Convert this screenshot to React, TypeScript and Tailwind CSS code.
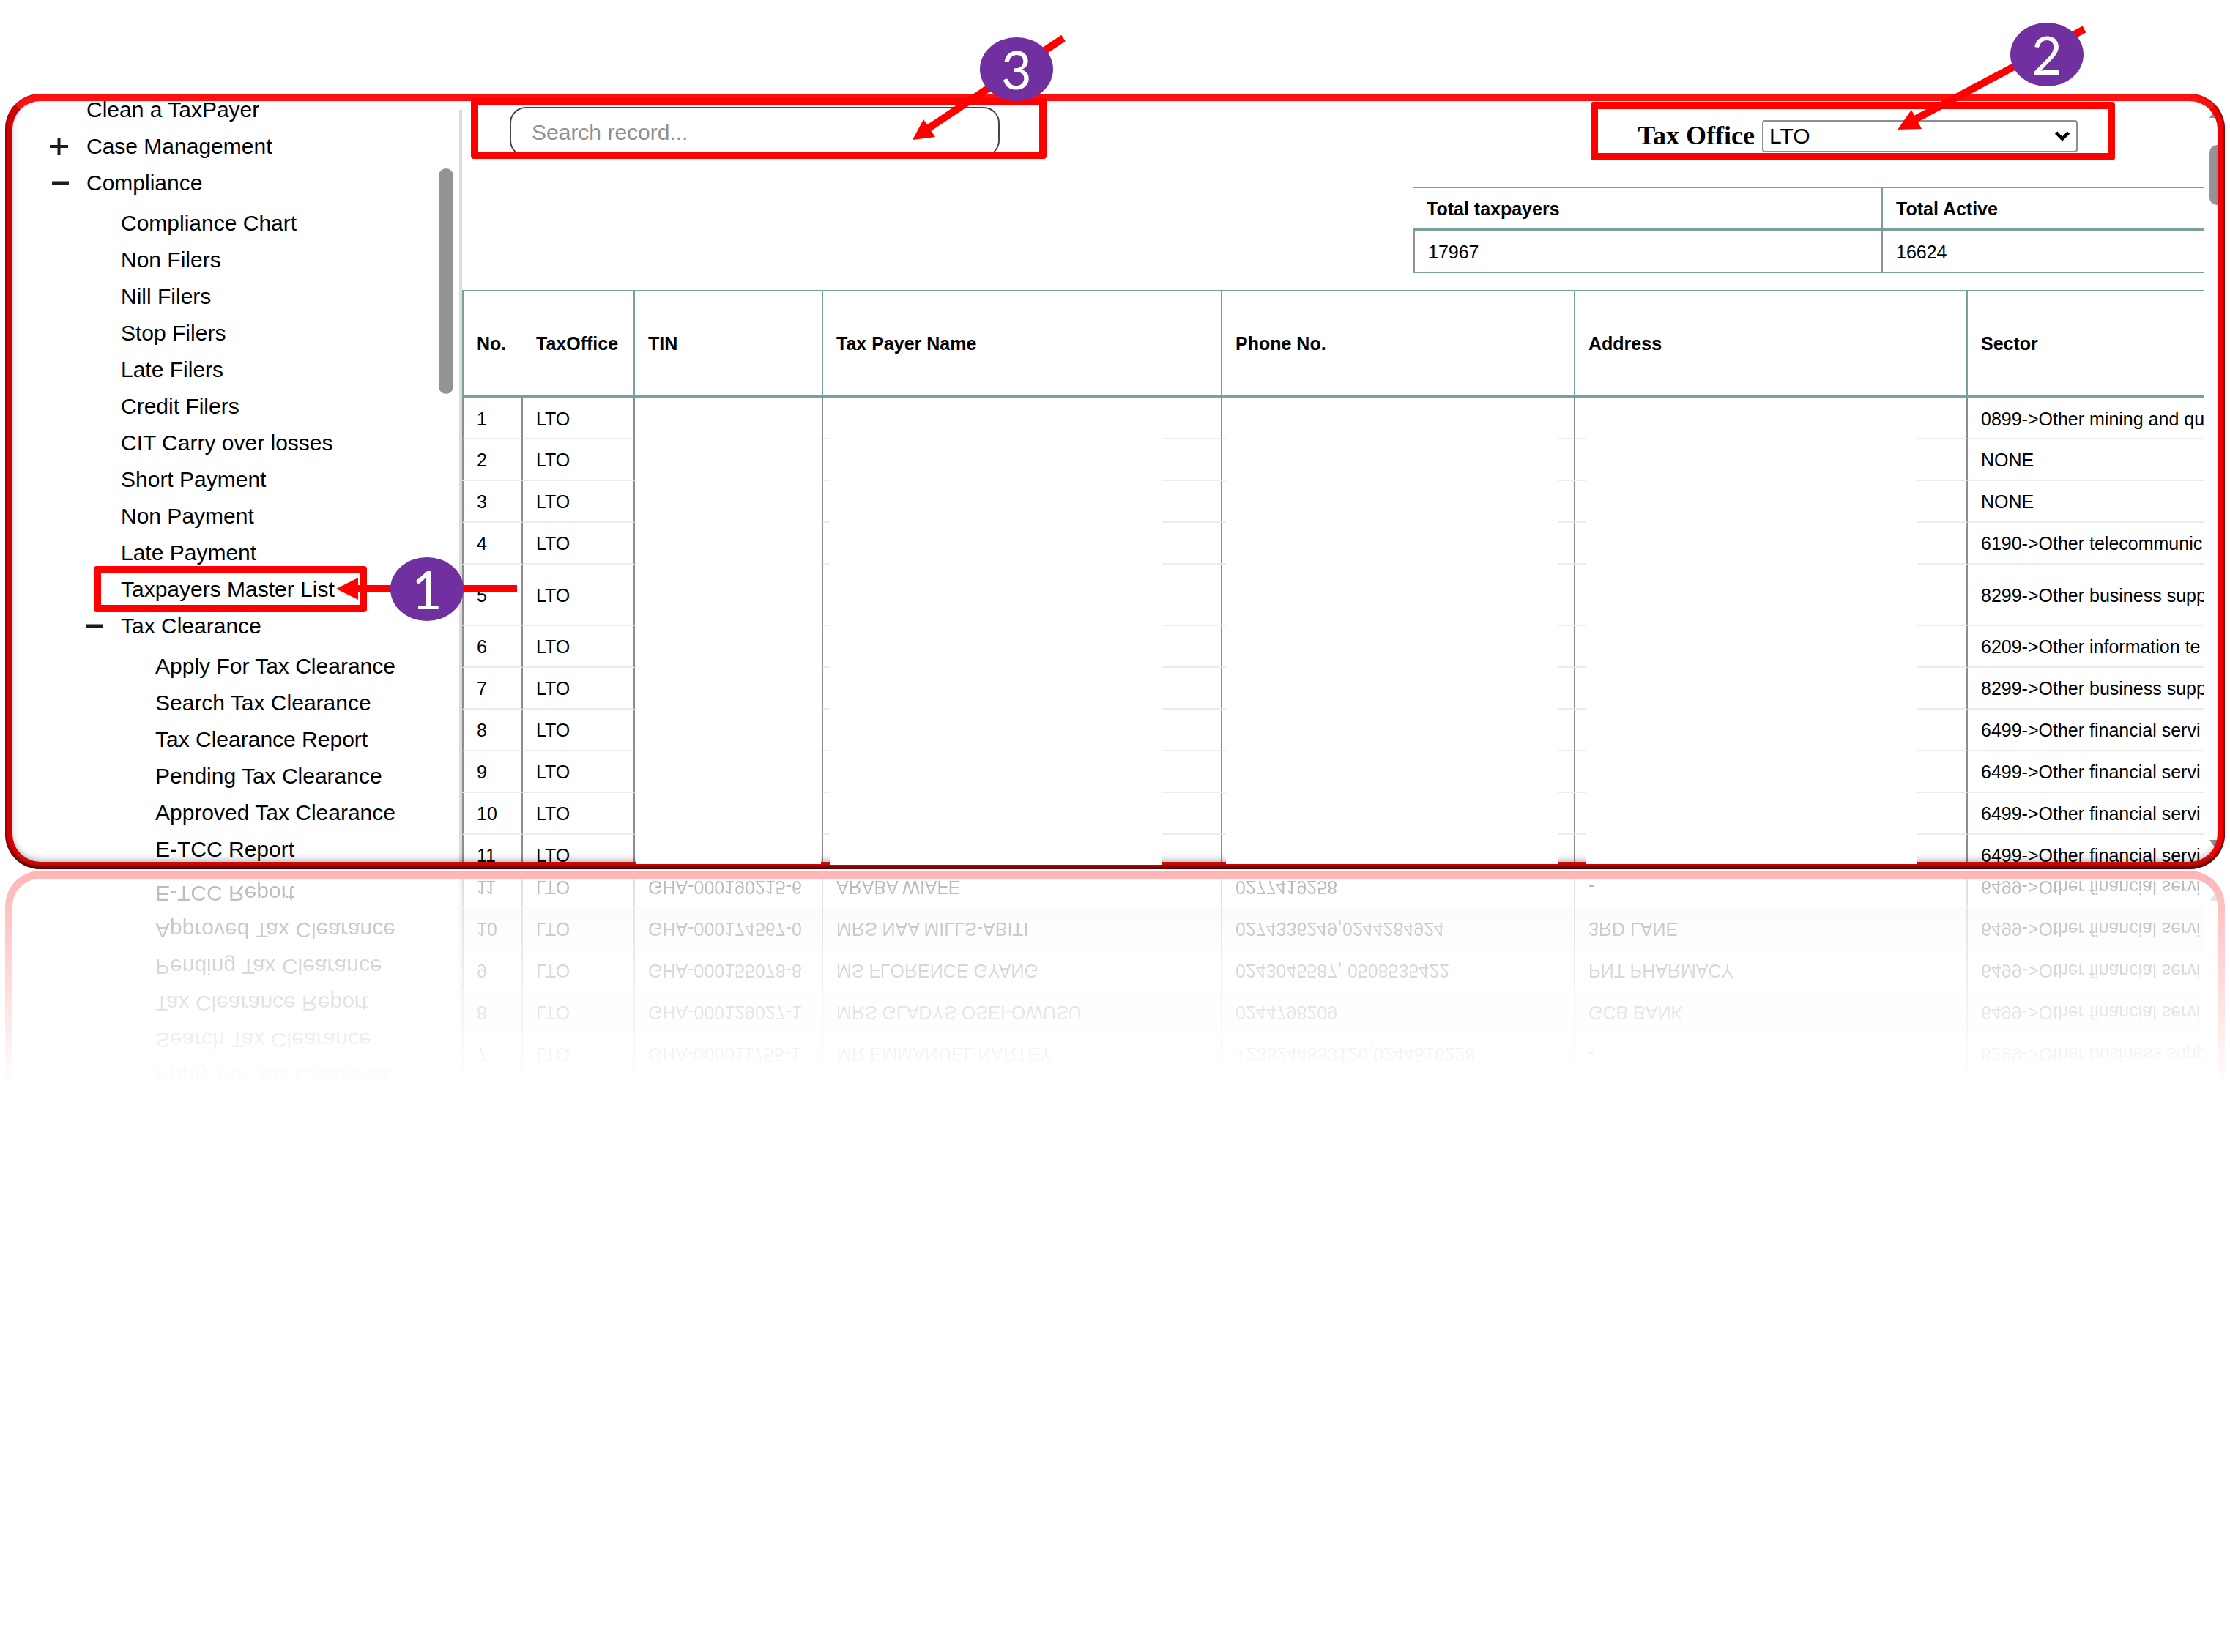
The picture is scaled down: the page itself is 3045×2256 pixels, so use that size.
import React, { useId } from "react";

type Node = { label: string; open?: boolean; children?: Node[] };

const clearance: Node[] = [
  { label: "Apply For Tax Clearance" },
  { label: "Search Tax Clearance" },
  { label: "Tax Clearance Report" },
  { label: "Pending Tax Clearance" },
  { label: "Approved Tax Clearance" },
  { label: "E-TCC Report" },
];

const menu: Node[] = [
  { label: "Clean a TaxPayer" },
  { label: "Case Management", open: false },
  {
    label: "Compliance",
    open: true,
    children: [
      { label: "Compliance Chart" },
      { label: "Non Filers" },
      { label: "Nill Filers" },
      { label: "Stop Filers" },
      { label: "Late Filers" },
      { label: "Credit Filers" },
      { label: "CIT Carry over losses" },
      { label: "Short Payment" },
      { label: "Non Payment" },
      { label: "Late Payment" },
      { label: "Taxpayers Master List" },
      { label: "Tax Clearance", open: true, children: clearance },
    ],
  },
];

type Row = [string, string, string, string, string];

const rows: Row[] = [
  ["", "", "", "", "0899->Other mining and qu"],
  ["", "", "", "", "NONE"],
  ["", "", "", "", "NONE"],
  ["", "", "", "", "6190->Other telecommunic"],
  ["", "", "", "", "8299->Other business supp"],
  ["", "", "", "", "6209->Other information te"],
  ["GHA-000011755-1", "MR EMMANUEL NARTEY", "+233244833120,0244516228", "-", "8299->Other business supp"],
  ["GHA-000129027-1", "MRS GLADYS OSEI-OWUSU", "0244798209", "GCB BANK", "6499->Other financial servi"],
  ["GHA-000155078-8", "MS FLORENCE GYANG", "0243045587, 0508535422", "PNT PHARMACY", "6499->Other financial servi"],
  ["GHA-000174567-0", "MRS NAA MILLS-ABITI", "0274336249,0244284924", "3RD LANE", "6499->Other financial servi"],
  ["GHA-000190215-6", "ARABA WIAFE", "0277419258", "-", "6499->Other financial servi"],
];

function ToggleIcon({ open }: { open: boolean }) {
  return (
    <svg viewBox="0 0 28 28" className="size-7" aria-hidden="true">
      <path
        d={open ? "M3 14H26" : "M0 14H25M12.500 3V25"}
        stroke="#1c1c1c"
        strokeWidth={open ? 5 : 4}
        fill="none"
      />
    </svg>
  );
}

function MenuList({ items, nested }: { items: Node[]; nested?: boolean }) {
  return (
    <ul className={nested ? "mt-[5px] pl-[47px]" : "-mt-[13px] pl-[51px]"}>
      {items.map((item) => (
        <li key={item.label}>
          <div className="flex h-[50px] items-center gap-[22px]">
            {item.open === undefined ? (
              <span className="w-7 shrink-0" />
            ) : (
              <button type="button" aria-expanded={item.open} aria-label={"Toggle " + item.label} className="shrink-0">
                <ToggleIcon open={item.open} />
              </button>
            )}
            <a href="#" className="whitespace-nowrap text-[30px] leading-[50px]">
              {item.label}
            </a>
          </div>
          {item.children && <MenuList items={item.children} nested />}
        </li>
      ))}
    </ul>
  );
}

const teal = "border-[#7a9f9f]";

function Summary() {
  const head = `h-[61px] border-t-2 border-b-4 ${teal} pl-[18px] text-left font-bold`;
  const cell = `h-[57px] border-b-2 ${teal} pl-[18px]`;
  return (
    <div className="ml-auto w-[1079px] overflow-hidden">
      <table className="w-[1282px] table-fixed border-separate border-spacing-0 text-[25px] leading-7">
        <thead>
          <tr>
            <th className={`${head} w-[641px] border-r-2`}>Total taxpayers</th>
            <th className={head}>Total Active</th>
          </tr>
        </thead>
        <tbody>
          <tr>
            <td className={`${cell} border-x-2 border-x-[#8f9494]`}>17967</td>
            <td className={cell}>16624</td>
          </tr>
        </tbody>
      </table>
    </div>
  );
}

const tableStyle = "w-[2700px] table-fixed border-separate border-spacing-0 text-[25px] leading-7";

function Columns() {
  return (
    <colgroup>
      <col className="w-[83px]" />
      <col className="w-[153px]" />
      <col className="w-[257px]" />
      <col className="w-[545px]" />
      <col className="w-[482px]" />
      <col className="w-[536px]" />
      <col />
    </colgroup>
  );
}

function Rows({ from, full }: { from: number; full?: boolean }) {
  const cell = "border-b-2 border-r-2 border-b-[#ececec] border-r-[#8c8c8c] pl-[18px] pt-px whitespace-nowrap";
  return (
    <tbody>
      {rows.slice(from).map((row, k) => {
        const i = from + k;
        return (
          <tr
            key={i}
            className={`${i === 0 ? "h-14" : i === 4 ? "h-[84px]" : "h-[57px]"} ${
              full && i % 2 === 1 ? "bg-[#f4f4f4]" : ""
            }`}
          >
            <td className={`${cell} border-l-2 border-l-[#8c8c8c]`}>{i + 1}</td>
            <td className={cell}>LTO</td>
            {row.map((value, j) => (
              <td key={j} className={cell}>
                {full || j === 4 ? value : ""}
              </td>
            ))}
          </tr>
        );
      })}
    </tbody>
  );
}

function MasterList() {
  const head = `h-[148px] border-t-2 border-b-4 ${teal} pl-[18px] text-left font-bold`;
  return (
    <div className="mt-[23px] overflow-hidden">
      <table className={tableStyle}>
        <Columns />
        <thead>
          <tr>
            <th className={`${head} border-l-2`}>No.</th>
            <th className={`${head} border-r-2`}>TaxOffice</th>
            <th className={`${head} border-r-2`}>TIN</th>
            <th className={`${head} border-r-2`}>Tax Payer Name</th>
            <th className={`${head} border-r-2`}>Phone No.</th>
            <th className={`${head} border-r-2`}>Address</th>
            <th className={head}>Sector</th>
          </tr>
        </thead>
        <Rows from={0} />
      </table>
    </div>
  );
}

function ScrollArrow({ place, d }: { place: string; d: string }) {
  return (
    <svg viewBox="0 0 20 14" className={`absolute -right-[9px] h-3.5 w-5 ${place}`} aria-hidden="true">
      <path d={d} fill="#8f8f8f" />
    </svg>
  );
}

function Screen() {
  const id = useId();
  return (
    <div className="flex h-full overflow-hidden rounded-[48px] p-2.5">
      <nav className="relative w-[610px] shrink-0">
        <MenuList items={menu} />
        <div className="absolute top-[92px] right-2 h-[308px] w-5 rounded-full bg-[#949494]" />
      </nav>
      <div className="mt-3 w-1 shrink-0 bg-[#dcdcdc]" />
      <main className="relative min-w-0 flex-1 pr-[19px]">
        <div className="flex h-[117px] items-start justify-between pr-[172px] pl-[65px]">
          <input
            type="search"
            aria-label="Search record"
            placeholder="Search record..."
            className="mt-2 h-[68px] w-[669px] rounded-[22px] border-2 border-[#444] px-7 pt-0.5 text-[30px] placeholder:text-[#8f8f8f]"
          />
          <div className="mt-[26px] flex items-start gap-2.5">
            <label
              htmlFor={id}
              className="font-['Liberation_Serif',serif] text-4xl leading-[42px] font-bold"
            >
              Tax Office
            </label>
            <div className="relative">
              <select
                id={id}
                className="block h-11 w-[431px] appearance-none rounded-[4px] border-2 border-[#8f8f8f] bg-white pl-2 text-[30px] leading-9"
              >
                <option>LTO</option>
              </select>
              <svg viewBox="0 0 20 14" className="pointer-events-none absolute top-[15px] right-[11px] h-3.5 w-5" aria-hidden="true">
                <path d="M1.500 2L10 10.500L18.500 2" fill="none" stroke="#000" strokeWidth="4.500" />
              </svg>
            </div>
          </div>
        </div>
        <Summary />
        <MasterList />
        <ScrollArrow place="top-[9px]" d="M10 0L20 14H0Z" />
        <div className="absolute top-[60px] -right-[9px] h-[82px] w-5 rounded-full bg-[#949494]" />
        <ScrollArrow place="bottom-4" d="M0 0H20L10 14Z" />
      </main>
    </div>
  );
}

function Reflection() {
  return (
    <section
      aria-hidden="true"
      inert
      className="mt-0.5 h-[294px] overflow-hidden [mask-image:linear-gradient(to_bottom,rgba(0,0,0,0.29),transparent)]"
    >
      <div className="relative flex h-full -scale-y-100 overflow-hidden rounded-b-[48px] px-2.5">
        <div className="flex w-[610px] shrink-0 flex-col justify-end pb-1.5 pl-[195px]">
          {clearance.map((item) => (
            <div key={item.label} className="h-[50px] shrink-0 text-[30px] leading-[50px]">
              {item.label}
            </div>
          ))}
        </div>
        <div className="w-1 shrink-0 bg-[#dcdcdc]" />
        <div className="relative mr-[19px] -mb-1.5 flex min-w-0 flex-1 flex-col justify-end overflow-hidden">
          <table className={tableStyle}>
            <Columns />
            <Rows from={6} full />
          </table>
        </div>
        <svg viewBox="0 0 20 14" className="absolute right-px bottom-7 h-3.5 w-5" aria-hidden="true">
          <path d="M0 0H20L10 14Z" fill="#8f8f8f" />
        </svg>
        <div className="absolute inset-0 rounded-b-[48px] border-x-10 border-b-[11px] border-[#f00]" />
      </div>
    </section>
  );
}

function Badge({ n, place }: { n: number; place: string }) {
  return (
    <div
      className={`absolute flex h-[87px] w-[100px] items-center justify-center rounded-[50%] bg-[#7030a0] pb-0.5 font-[Lato,sans-serif] text-[72px] leading-[80px] text-white ${place}`}
    >
      {n}
    </div>
  );
}

function Annotations() {
  return (
    <div className="pointer-events-none absolute inset-0">
      <div className="absolute top-[416px] left-[862px] h-[636px] w-[252px] bg-white" />
      <div className="absolute top-[416px] left-[1127px] h-[637px] w-[453px] bg-white" />
      <div className="absolute top-[416px] left-[1667px] h-[636px] w-[453px] bg-white" />
      <div className="absolute top-[416px] left-[2158px] h-[636px] w-[453px] bg-white" />

      <div className="absolute top-[645px] left-[121px] h-[63px] w-[373px] rounded-[4px] border-10 border-[#f00]" />
      <div className="absolute top-[6px] left-[636px] h-[83px] w-[786px] rounded-[4px] border-10 border-[#f00]" />
      <div className="absolute top-[11px] left-[2165px] h-[80px] w-[716px] rounded-[4px] border-10 border-[#f00]" />

      <svg viewBox="0 0 260 40" className="absolute top-[656px] left-[446px] h-10 w-[260px]" aria-hidden="true">
        <path d="M30 20H253" stroke="#f00" strokeWidth="10" />
        <path d="M6 20L36 5V35Z" fill="#f00" />
      </svg>
      <svg viewBox="0 0 220 160" className="absolute -top-[86px] left-[1233px] h-[160px] w-[220px]" aria-hidden="true">
        <path d="M25 135L212 10" stroke="#f00" strokeWidth="10" />
        <path d="M6 149L21 121L37 145Z" fill="#f00" />
      </svg>
      <svg viewBox="0 0 270 160" className="absolute -top-[98px] left-[2578px] h-[160px] w-[270px]" aria-hidden="true">
        <path d="M26 135L261 10" stroke="#f00" strokeWidth="10" />
        <path d="M6 147L25 120L39 146Z" fill="#f00" />
      </svg>

      <Badge n={1} place="left-[526px] top-[633px]" />
      <Badge n={2} place="left-[2738px] -top-[97px]" />
      <Badge n={3} place="left-[1331px] -top-[77px]" />
    </div>
  );
}

export default function App() {
  return (
    <div className="min-h-screen overflow-hidden bg-white px-[7px] pt-32 font-['Liberation_Sans',Arial,sans-serif] text-black">
      <section className="relative h-[1059px]">
        <Screen />
        <div className="pointer-events-none absolute inset-0 rounded-[48px] border-10 border-t-[#ff1010] border-r-[#f40000] border-b-[#c80c0c] border-l-[#d20000] shadow-[inset_0_-8px_8px_-4px_rgba(0,0,0,0.2),inset_3px_0_6px_rgba(0,0,0,0.08)]" />
        <div className="pointer-events-none absolute inset-0 rounded-[48px] shadow-[inset_0_-5px_4px_-1px_rgba(80,0,0,0.85),inset_-3px_0_2px_-1px_rgba(90,0,0,0.7),inset_2px_0_2px_rgba(110,0,0,0.4)]" />
        <Annotations />
      </section>
      <Reflection />
    </div>
  );
}
